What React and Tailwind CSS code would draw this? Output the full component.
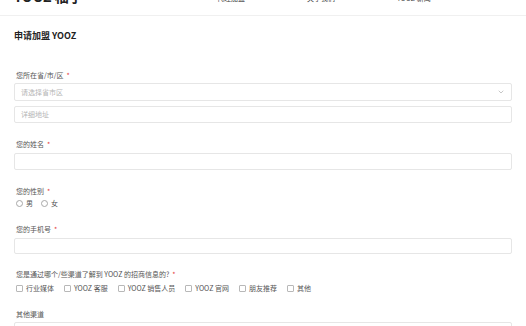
import { ChevronDown } from "lucide-react";

const Label = ({ text, required = true, className = "" }) => (
  <p className={`h-[10px] leading-[10px] text-[7px] text-[#555] ${className}`}>
    {text}
    {required && <span className="text-[#e4393c] ml-[3px]">*</span>}
  </p>
);

const Box = ({ className = "", children }) => (
  <div className={`w-full border border-[#e6e6e6] rounded-[2px] bg-white flex items-center px-[6px] ${className}`}>
    {children}
  </div>
);

const Check = ({ label }) => (
  <div className="flex items-center gap-[3px]">
    <span className="w-[7px] h-[7px] border border-[#b8b8b8] rounded-[1px] bg-white" />
    <span className="text-[7px] leading-[10px] text-[#555]">{label}</span>
  </div>
);

const Radio = ({ label }) => (
  <div className="flex items-center gap-[3px]">
    <span className="w-[7px] h-[7px] border border-[#a8a8a8] rounded-full bg-white" />
    <span className="text-[7px] leading-[10px] text-[#555]">{label}</span>
  </div>
);

const App = () => {
  const channels = ["行业媒体", "YOOZ 客服", "YOOZ 销售人员", "YOOZ 官网", "朋友推荐", "其他"];

  return (
    <div
      className="w-[526px] h-[326px] overflow-hidden bg-white"
      style={{ fontFamily: '"Noto Sans CJK SC", "Noto Sans", sans-serif' }}
    >
      {/* header, scrolled mostly out of view */}
      <div className="-mt-[24px] h-[40px] border-b border-[#f0f0f0] flex items-center px-[14px]">
        <p className="w-[203px] text-[14px] font-bold text-[#222] leading-[14px]">YOOZ 柚子</p>
        <div className="mt-[5px] flex gap-[62px] text-[7px] leading-[8px] text-[#444]">
          <span>代理加盟</span>
          <span>关于我们</span>
          <span>YOOZ 新闻</span>
        </div>
      </div>

      <div className="px-[14px]">
        <h1 className="mt-[14px] h-[12px] leading-[12px] text-[9px] font-bold text-[#222]">申请加盟 YOOZ</h1>

        <Label text="您所在省/市/区" className="mt-[28px] pl-[2px]" />
        <Box className="mt-[3px] h-[18px] justify-between">
          <span className="text-[7px] text-[#b5b5b5]">请选择省市区</span>
          <ChevronDown className="w-[8px] h-[8px] text-[#aaa]" strokeWidth={2} />
        </Box>
        <Box className="mt-[5px] h-[17px]">
          <span className="text-[7px] text-[#b5b5b5]">详细地址</span>
        </Box>

        <Label text="您的姓名" className="mt-[16px] pl-[2px]" />
        <Box className="mt-[4px] h-[17px]" />

        <Label text="您的性别" className="mt-[16px] pl-[2px]" />
        <div className="mt-[2px] h-[10px] flex items-center gap-[8px] pl-[2px]">
          <Radio label="男" />
          <Radio label="女" />
        </div>

        <Label text="您的手机号" className="mt-[16px] pl-[2px]" />
        <Box className="mt-[4px] h-[16px]" />

        <Label text="您是通过哪个/些渠道了解到 YOOZ 的招商信息的?" className="mt-[15px] pl-[2px]" />
        <div className="mt-[4px] h-[10px] flex items-center gap-[10px] pl-[2px]">
          {channels.map((c, i) => (
            <Check key={i} label={c} />
          ))}
        </div>

        <Label text="其他渠道" required={false} className="mt-[16px] pl-[2px]" />
        <Box className="mt-[3px] h-[17px]" />
      </div>
    </div>
  );
};

export default App;
